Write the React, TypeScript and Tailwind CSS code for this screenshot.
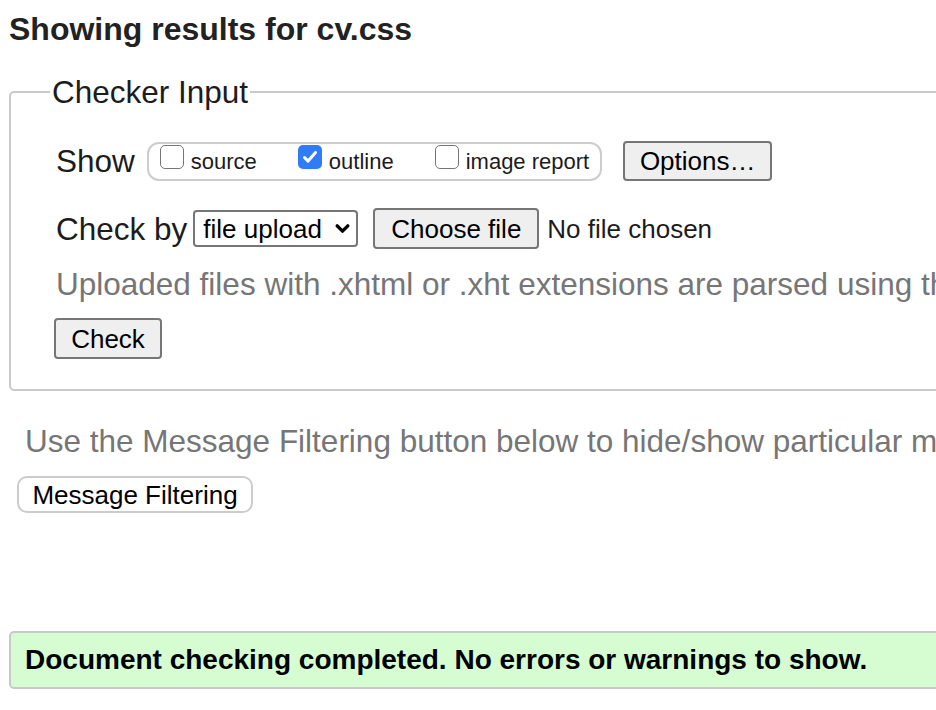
const Box = ({ checked }: { checked?: boolean }) =>
  checked ? (
    <span className="mb-[9px] flex h-[24px] w-[24px] shrink-0 items-center justify-center rounded-[5px] bg-[#2f7cf6]">
      <svg width="18" height="18" viewBox="0 0 18 18" fill="none">
        <path d="M3.5 9.5l3.6 3.6L14.5 4.5" stroke="#fff" strokeWidth="3" strokeLinecap="round" strokeLinejoin="round" />
      </svg>
    </span>
  ) : (
    <span className="mb-[9px] h-[24px] w-[24px] shrink-0 rounded-[5px] border-[1.5px] border-[#767676] bg-white" />
  );

const btn =
  "flex items-center justify-center rounded-[4px] border-2 border-[#767676] bg-[#efefef] text-[26px] leading-none text-black";

export default function App() {
  return (
    <div className="h-[710px] w-[936px] overflow-hidden bg-white font-['Liberation_Sans',Arial,sans-serif] text-[#1c1c1c]">
      <div className="w-[1200px]">
        <h2 className="ml-[9px] mt-[11px] text-[32px] font-bold leading-[36px] text-[#222]">
          Showing results for cv.css
        </h2>

        <fieldset className="ml-[9px] mt-[27px] w-[1150px] rounded-[5px] border-2 border-[#cacaca] pb-[30px] pl-[39px] pt-[31px]">
          <legend className="px-[2px] text-[31.5px] leading-[36px]">Checker Input</legend>

          <div className="pl-[4px]">
            <div className="flex h-[40px] items-center pl-[2px]">
              <span className="text-[31.5px] leading-[36px]">Show</span>
              <div className="ml-[12px] flex h-[39px] items-center gap-[41px] rounded-[12px] border-2 border-[#cdcdcd] pl-[11px] pr-[11px] text-[22px] leading-[25px]">
                <label className="flex items-center gap-[7px]">
                  <Box />
                  <span>source</span>
                </label>
                <label className="flex items-center gap-[7px]">
                  <Box checked />
                  <span>outline</span>
                </label>
                <label className="flex items-center gap-[7px]">
                  <Box />
                  <span>image report</span>
                </label>
              </div>
              <button className={`${btn} ml-[21px] h-[40px] w-[149px]`}>Options…</button>
            </div>

            <div className="mt-[27px] flex h-[41px] items-center pl-[2px]">
              <span className="text-[31.5px] leading-[36px]">Check by</span>
              <div className="ml-[6px] flex h-[37px] w-[165px] items-center justify-between rounded-[4px] border-2 border-[#767676] bg-white pl-[8px] pr-[5px] text-[26px] leading-none text-black">
                <span>file upload</span>
                <svg width="17" height="17" viewBox="0 0 16 16" fill="none">
                  <path d="M3 5.5l5 5 5-5" stroke="#000" strokeWidth="3.2" strokeLinecap="round" strokeLinejoin="round" />
                </svg>
              </div>
              <button className={`${btn} ml-[15px] h-[41px] w-[166px]`}>Choose file</button>
              <span className="ml-[8px] text-[26px] leading-none">No file chosen</span>
            </div>

            <p className="mt-[17px] whitespace-nowrap pl-[2px] text-[31.5px] leading-[36px] text-[#767676]">
              Uploaded files with .xhtml or .xht extensions are parsed using the XML parser.
            </p>

            <button className={`${btn} mt-[16px] h-[41px] w-[108px]`}>Check</button>
          </div>
        </fieldset>

        <p className="ml-[25px] mt-[32px] whitespace-nowrap text-[31.5px] leading-[36px] text-[#767676]">
          Use the Message Filtering button below to hide/show particular messages, and to see total counts of errors and warnings.
        </p>

        <button className="ml-[17px] mt-[17px] flex h-[37px] w-[236px] items-center justify-center rounded-[10px] border-2 border-[#cccccc] bg-white text-[26px] leading-none text-black">
          Message Filtering
        </button>

        <div className="ml-[9px] mt-[118px] flex h-[58px] w-[1150px] items-center rounded-[5px] border-2 border-[#c8c8c8] bg-[#d6fcd2] pl-[14px] text-[28px] font-bold leading-none text-black">
          Document checking completed. No errors or warnings to show.
        </div>
      </div>
    </div>
  );
}
